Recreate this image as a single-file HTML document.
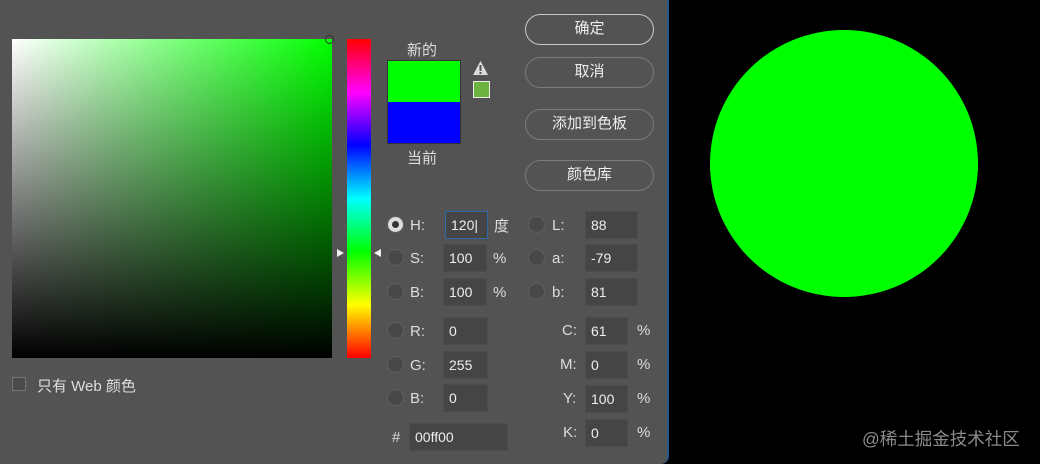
<!DOCTYPE html><html><head><meta charset="utf-8"><style>
*{margin:0;padding:0;box-sizing:border-box}
body{width:1040px;height:464px;background:#000;position:relative;overflow:hidden;font-family:"Liberation Sans","Noto Sans CJK SC",sans-serif;color:#ddd;font-size:15px}
.p{position:absolute;left:0;top:0;width:669px;height:464px;background:#535353;border-right:2px solid #2a5a8a;border-bottom-right-radius:8px}
.a{position:absolute}
.btn{position:absolute;left:525px;width:129px;height:31px;border:1.5px solid #7a7a7a;border-radius:16px;text-align:center;line-height:28px;color:#eee;font-size:15px}
.in{position:absolute;height:28px;background:#454545;border:1px solid #4c4c4c;color:#eee;padding-left:5px;line-height:27px;font-size:14px}
.r{position:absolute;width:17px;height:17px;border-radius:50%;background:#484848;border:1px solid #5e5e5e}
.l{position:absolute;font-size:15px;color:#ddd}
</style></head><body>
<div class="p">
<div class="a" style="left:12px;top:39px;width:320px;height:319px;background:linear-gradient(to top,#000,rgba(0,0,0,0)),linear-gradient(to right,#fff,#00ff00)"></div>
<div class="a" style="left:325px;top:35px;width:9px;height:9px;border:1px solid #333;border-radius:50%"></div>
<div class="a" style="left:347px;top:39px;width:24px;height:319px;background:linear-gradient(#f00,#f0f 16.7%,#00f 33.3%,#0ff 50%,#0f0 66.7%,#ff0 83.3%,#f00)"></div>
<div class="a" style="left:337px;top:249px;width:0;height:0;border-left:7px solid #eee;border-top:4px solid transparent;border-bottom:4px solid transparent"></div>
<div class="a" style="left:374px;top:249px;width:0;height:0;border-right:7px solid #eee;border-top:4px solid transparent;border-bottom:4px solid transparent"></div>
<div class="a" style="left:12px;top:377px;width:14px;height:14px;border:1px solid #777;background:#4a4a4a"></div>
<div class="l" style="left:37px;top:375px">只有 Web 颜色</div>
<div class="l" style="left:407px;top:39px">新的</div>
<div class="a" style="left:387px;top:60px;width:74px;height:42px;background:#0f0;border:1px solid #333;border-bottom:none"></div>
<div class="a" style="left:387px;top:102px;width:74px;height:42px;background:#00f;border:1px solid #333;border-top:none"></div>
<div class="l" style="left:407px;top:147px">当前</div>
<svg class="a" style="left:473px;top:61px" width="15" height="14"><path d="M7.5 0L15 14H0Z" fill="#ddd"/><rect x="6.5" y="4" width="2" height="6" fill="#535353"/><rect x="6.5" y="11" width="2" height="2" fill="#535353"/></svg>
<div class="a" style="left:473px;top:81px;width:17px;height:17px;background:#6db33f;border:1.5px solid #eee"></div>
<div class="btn" style="top:14px;border-color:#c8c8c8">确定</div>
<div class="btn" style="top:57px">取消</div>
<div class="btn" style="top:109px">添加到色板</div>
<div class="btn" style="top:160px">颜色库</div>
<div class="r" style="left:387px;top:216px;background:#ddd"><div class="a" style="left:4px;top:4px;width:7px;height:7px;border-radius:50%;background:#333"></div></div>
<div class="r" style="left:387px;top:249px"></div><div class="r" style="left:387px;top:283px"></div>
<div class="r" style="left:387px;top:322px"></div><div class="r" style="left:387px;top:356px"></div><div class="r" style="left:387px;top:389px"></div>
<div class="r" style="left:528px;top:216px"></div><div class="r" style="left:528px;top:249px"></div><div class="r" style="left:528px;top:283px"></div>
<div class="l" style="left:410px;top:217px">H:</div><div class="l" style="left:410px;top:250px">S:</div><div class="l" style="left:410px;top:284px">B:</div>
<div class="l" style="left:410px;top:323px">R:</div><div class="l" style="left:410px;top:357px">G:</div><div class="l" style="left:410px;top:390px">B:</div>
<div class="l" style="left:392px;top:429px">#</div>
<div class="in" style="left:445px;top:211px;width:43px;border-color:#2f6aa8">120|</div>
<div class="in" style="left:443px;top:244px;width:44px">100</div>
<div class="in" style="left:443px;top:278px;width:44px">100</div>
<div class="in" style="left:443px;top:317px;width:45px">0</div>
<div class="in" style="left:443px;top:351px;width:45px">255</div>
<div class="in" style="left:443px;top:384px;width:45px">0</div>
<div class="in" style="left:409px;top:423px;width:99px">00ff00</div>
<div class="l" style="left:494px;top:215px">度</div><div class="l" style="left:493px;top:250px">%</div><div class="l" style="left:493px;top:284px">%</div>
<div class="l" style="left:552px;top:217px">L:</div><div class="l" style="left:552px;top:250px">a:</div><div class="l" style="left:552px;top:284px">b:</div>
<div class="in" style="left:585px;top:211px;width:53px">88</div>
<div class="in" style="left:585px;top:244px;width:53px">-79</div>
<div class="in" style="left:585px;top:278px;width:53px">81</div>
<div class="l" style="left:562px;top:322px">C:</div><div class="l" style="left:560px;top:356px">M:</div><div class="l" style="left:563px;top:390px">Y:</div><div class="l" style="left:563px;top:424px">K:</div>
<div class="in" style="left:585px;top:317px;width:43px">61</div>
<div class="in" style="left:585px;top:351px;width:43px">0</div>
<div class="in" style="left:585px;top:385px;width:43px">100</div>
<div class="in" style="left:585px;top:419px;width:43px">0</div>
<div class="l" style="left:637px;top:322px">%</div><div class="l" style="left:637px;top:356px">%</div><div class="l" style="left:637px;top:390px">%</div><div class="l" style="left:637px;top:424px">%</div>
</div>
<div class="a" style="left:710px;top:30px;width:268px;height:267px;border-radius:50%;background:#0f0"></div>
<div class="a" style="left:862px;top:426px;font-size:17.5px;color:#8a8a8a">@稀土掘金技术社区</div>
</body></html>
